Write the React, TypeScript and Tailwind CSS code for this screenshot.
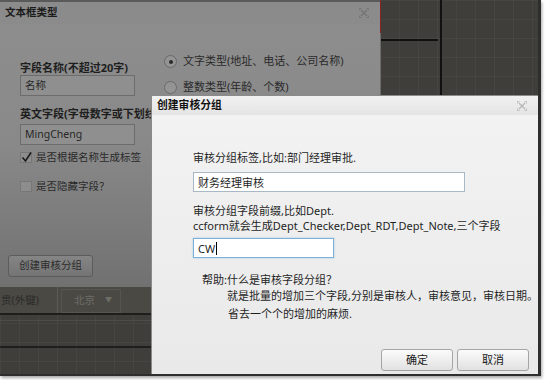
import React from 'react'

function CloseIcon({ color }: { color: string }) {
  return (
    <svg width="10" height="10" viewBox="0 0 10 10" fill="none" stroke={color} strokeWidth="1.2">
      <path d="M2 2 L8 8 M8 2 L2 8" />
      <path d="M0.5 2.5 V0.5 H2.5 M7.5 0.5 H9.5 V2.5 M9.5 7.5 V9.5 H7.5 M2.5 9.5 H0.5 V7.5" strokeWidth="0.8" />
    </svg>
  )
}

function Radio({ checked }: { checked?: boolean }) {
  return (
    <span className="flex h-[13px] w-[13px] items-center justify-center rounded-full border border-[#6a6a6a] bg-[#949494]">
      {checked && <span className="h-[4px] w-[4px] rounded-full bg-[#2a2a2a]" />}
    </span>
  )
}

function Backdrop() {
  return (
    <>
      {/* column/row lines of the form designer behind the dialogs */}
      <div className="absolute left-[440px] top-0 h-[96px] w-[2px] bg-[#111]" />
      <div className="absolute left-[380px] top-[39px] h-[2px] w-[58px] bg-[#111]" />
      <div className="absolute left-0 top-[287px] flex h-[27px] w-[151px] items-center bg-[#4a4944]">
        <span className="w-[57px] whitespace-nowrap pl-[1px] text-[10.5px] text-[#2a2a28]">贯(外键)</span>
        <span className="h-full w-px bg-[#5c5b56]" />
        <span className="ml-[3px] flex h-[24px] w-[60px] items-center gap-[10px] border border-[#56554f] pl-[12px] text-[10.5px] text-[#6e6d68]">
          北京<span className="text-[7px]">▼</span>
        </span>
      </div>
      <div className="absolute left-0 top-[313px] h-[2px] w-[151px] bg-[#1e1e1c]" />
      <div className="absolute left-0 top-[320px] h-px w-[151px] bg-[#4d4c47]" />
      <div className="absolute left-0 top-[346px] h-[2px] w-[151px] bg-[#1e1e1c]" />
    </>
  )
}

function FieldDialog() {
  return (
    <div className="absolute left-0 top-0 flex h-[287px] w-[381px] flex-col border-r border-[#6d6d6d] bg-gradient-to-b from-[#8e8e8e] via-[#898989] to-[#717171]">
      <span className="absolute -right-px top-0 h-[33px] w-px bg-[#8a2424]" />
      <div className="flex h-[24px] items-center justify-between border-t-2 border-[#5a5a5a] bg-[#8b8b8b] pl-[5px] pr-[11px]">
        <span className="text-[10.5px] font-bold text-[#1c1c1c]">文本框类型</span>
        <CloseIcon color="#727272" />
      </div>
      <div className="flex">
        <div className="flex w-[144px] flex-col pl-[20px] pt-[36px]">
          <span className="whitespace-nowrap text-[11px] font-bold leading-[15px] text-[#1e1e1e]">字段名称(不超过20字)</span>
          <div className="flex h-[21px] w-[115px] items-center border border-[#6c6c6c] bg-[#8f8f8f] pl-[4px] text-[10.5px] text-[#272727]">名称</div>
          <div className="mt-[10px] w-[131px] overflow-hidden">
            <span className="block whitespace-nowrap text-[11px] font-bold leading-[15px] text-[#1e1e1e]">英文字段(字母数字或下划线</span>
          </div>
          <div className="mt-[3px] flex h-[21px] w-[115px] items-center border border-[#6c6c6c] bg-[#8f8f8f] pl-[4px] text-[10.5px] text-[#272727]">MingCheng</div>
          <div className="mt-[5px] flex h-[15px] items-center gap-[4px] whitespace-nowrap text-[10.5px] text-[#2a2a2a]">
            <span className="relative h-[11px] w-[12px] border border-[#777] bg-[#8d8d8d]">
              <svg className="absolute -left-[1px] -top-[3px]" width="14" height="14" viewBox="0 0 14 14" fill="none" stroke="#1a1a1a" strokeWidth="1.6">
                <path d="M2.5 7.5 L5.5 11 L11 2.5" />
              </svg>
            </span>
            是否根据名称生成标签
          </div>
          <div className="mt-[14px] flex h-[15px] items-center gap-[4px] whitespace-nowrap text-[10.5px] text-[#2a2a2a]">
            <span className="h-[11px] w-[12px] border border-[#777] bg-[#8d8d8d]" />
            是否隐藏字段？
          </div>
        </div>
        <div className="flex flex-col pl-[20px] pt-[30px]">
          <div className="flex h-[15px] items-center gap-[6px] whitespace-nowrap text-[11px] text-[#2a2a2a]">
            <Radio checked />
            文字类型(地址、电话、公司名称)
          </div>
          <div className="mt-[11px] flex h-[15px] items-center gap-[6px] whitespace-nowrap text-[11px] text-[#2a2a2a]">
            <Radio />
            整数类型(年龄、个数)
          </div>
        </div>
      </div>
      <div className="mt-auto pb-[10px] pl-[8px]">
        <button className="h-[22px] w-[85px] rounded-[3px] border border-[#5c5c5c] bg-gradient-to-b from-[#858585] to-[#747474] text-[10.5px] text-[#2c2c2c]">
          创建审核分组
        </button>
      </div>
    </div>
  )
}

function ReviewGroupDialog() {
  return (
    <div className="absolute left-[151px] top-[95px] flex h-[279px] w-[387px] flex-col border-l border-t border-[#8a8a8a] bg-gradient-to-b from-[#f3f3f3] to-[#e9e9e9] text-[11px] text-[#1f1f1f]">
      <div className="flex h-[19px] items-center justify-between bg-gradient-to-b from-[#f1f1f1] to-[#e4e4e4] pl-[5px] pr-[11px]">
        <span className="text-[10.8px] font-bold text-[#111]">创建审核分组</span>
        <CloseIcon color="#b5b5b5" />
      </div>
      <div className="flex flex-col pl-[41px] pt-[35px] leading-[15px]">
        <span>审核分组标签,比如:部门经理审批.</span>
        <div className="mt-[7px] flex h-[20px] w-[272px] items-center border border-[#a9b8c6] bg-white pl-[4px]">财务经理审核</div>
        <span className="mt-[11px]">审核分组字段前缀,比如Dept.</span>
        <span className="whitespace-nowrap">ccform就会生成Dept_Checker,Dept_RDT,Dept_Note,三个字段</span>
        <div className="mt-[5px] flex h-[20px] w-[141px] items-center border border-[#7fb0d6] bg-white pl-[4px] shadow-[0_0_2px_#a8cdea]">
          CW<span className="ml-px h-[13px] w-px bg-black" />
        </div>
        <span className="ml-[9px] mt-[14px]">帮助:什么是审核字段分组？</span>
        <span className="ml-[34px] mt-px whitespace-nowrap">就是批量的增加三个字段,分别是审核人，审核意见，审核日期。</span>
        <span className="ml-[35px] mt-[3px]">省去一个个的增加的麻烦.</span>
      </div>
      <div className="mt-auto flex justify-end gap-[4px] pb-[3px] pr-[9px]">
        <button className="h-[22px] w-[72px] rounded-[3px] border border-[#a5a5a5] bg-gradient-to-b from-[#fbfbfb] to-[#e1e1e1] text-[#1a1a1a]">确定</button>
        <button className="h-[22px] w-[72px] rounded-[3px] border border-[#a5a5a5] bg-gradient-to-b from-[#fbfbfb] to-[#e1e1e1] text-[#1a1a1a]">取消</button>
      </div>
    </div>
  )
}

export default function App() {
  return (
    <div className="h-[380px] w-[547px] bg-white font-['Noto_Sans','Noto_Sans_CJK_SC',sans-serif]">
      <div className="relative h-[376px] w-[541px] overflow-hidden border-b-2 border-r-[3px] border-[#2e2e2e] bg-[#3f3e3a] bg-[linear-gradient(to_right,rgba(255,255,255,0.035)_1px,transparent_1px),linear-gradient(to_bottom,rgba(255,255,255,0.035)_1px,transparent_1px)] bg-[size:19px_19px] shadow-[1px_2px_3px_rgba(0,0,0,0.35)]">
        <Backdrop />
        <FieldDialog />
        <ReviewGroupDialog />
      </div>
    </div>
  )
}
